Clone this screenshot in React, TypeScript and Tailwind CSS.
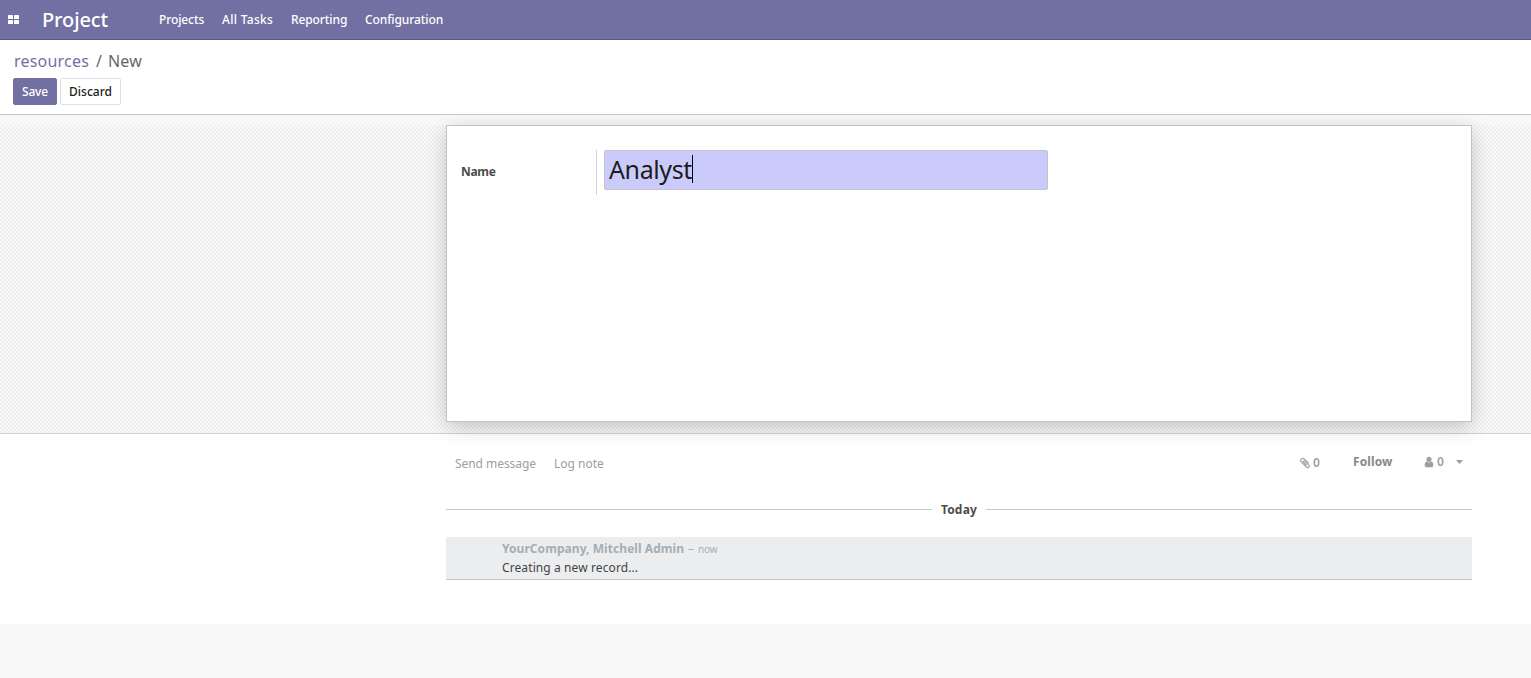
import React from 'react';

function GridIcon() {
  return (
    <svg className="mt-[15px] h-[9px] w-[11px]" viewBox="0 0 11 9" fill="#fff">
      <rect x="0" y="0" width="5" height="4" rx="0.6" />
      <rect x="6" y="0" width="5" height="4" rx="0.6" />
      <rect x="0" y="5" width="5" height="4" rx="0.6" />
      <rect x="6" y="5" width="5" height="4" rx="0.6" />
    </svg>
  );
}

function PaperclipIcon() {
  return (
    <svg className="mt-[6px] h-3 w-3" viewBox="0 0 1792 1792" fill="currentColor" stroke="currentColor" strokeWidth="60">
      <path d="M1596 1385q0 117-79 196t-196 79q-135 0-235-100l-777-776q-113-115-113-271 0-159 110-270t269-111q158 0 273 113l605 606q10 10 10 22 0 16-30.5 46.5t-46.5 30.5q-13 0-23-10l-606-607q-79-77-181-77-106 0-179 75t-73 181q0 105 76 181l776 777q63 63 145 63 64 0 106-42t42-106q0-82-63-145l-581-581q-26-24-60-24-29 0-48 19t-19 48q0 32 25 59l410 410q10 10 10 22 0 16-31 47t-47 31q-12 0-22-10l-410-410q-63-61-63-149 0-82 57-139t139-57q88 0 149 63l581 581q100 98 100 235z" />
    </svg>
  );
}

function UserIcon() {
  return (
    <svg className="mt-[5px] -ml-px h-3 w-3" viewBox="0 0 1792 1792" fill="currentColor">
      <path d="M1536 1399q0 109-62.5 187t-150.5 78h-854q-88 0-150.5-78t-62.5-187q0-85 8.5-160.5t31.5-152 58.5-131 94-89 134.5-34.5q131 128 313 128t313-128q76 0 134.5 34.5t94 89 58.5 131 31.5 152 8.5 160.5zm-256-887q0 159-112.5 271.5t-271.5 112.5-271.5-112.5-112.5-271.5 112.5-271.5 271.5-112.5 271.5 112.5 112.5 271.5z" />
    </svg>
  );
}

function NavBar() {
  return (
    <header className="flex h-10 items-start border-b border-[#5a5889] bg-[#7270a2] pl-2 text-white">
      <GridIcon />
      <h1 className="ml-[23px] w-[117px] text-[20px] leading-[39px] font-medium tracking-[-0.1px]">Project</h1>
      <nav className="flex text-[12px] leading-[39px] font-medium">
        <a className="w-[63px] tracking-[-0.1px]">Projects</a>
        <a className="w-[69px] tracking-[0.3px]">All Tasks</a>
        <a className="w-[74px] tracking-[-0.1px]">Reporting</a>
        <a className="tracking-[-0.1px]">Configuration</a>
      </nav>
    </header>
  );
}

function ControlPanel() {
  return (
    <section className="h-[75px] border-b border-[#c8c8ca] bg-white px-[13px] pt-[11px]">
      <div className="flex pl-px text-[16px] leading-[21px] tracking-[0.2px]">
        <a className="w-[82px] text-[#7270a2]">resources</a>
        <span className="w-3 text-[#666]">/</span>
        <span className="text-[#666]">New</span>
      </div>
      <div className="mt-[6px] flex gap-[3px] text-[12px] leading-[25px] font-medium">
        <button className="h-[27px] w-11 rounded-[2px] border border-[#7270a2] bg-[#7270a2] tracking-[-0.2px] text-white">Save</button>
        <button className="h-[27px] w-[61px] rounded-[2px] border border-[#dee0e6] bg-white text-[#222]">Discard</button>
      </div>
    </section>
  );
}

function FormSheet() {
  return (
    <section className="relative border-b border-[#d2d2d4] pt-[10px]">
      <div className="flex h-[308px] bg-[repeating-conic-gradient(#eeeeee_0_25%,#fafafa_0_50%)] bg-size-[4px_4px]">
        <div className="ml-[446px] flex h-[297px] w-[1026px] items-start border border-[#c0c0cf] bg-white pt-6 pl-[14px] shadow-[0_5px_20px_-1px_rgba(0,0,0,0.22)]">
          <label className="w-[135px] text-[12px] leading-[43px] font-bold tracking-[-0.3px] text-[#4c4c4c]">Name</label>
          <div className="h-[45px] border-l border-[#d5d5d5] pl-[7px]">
            <div className="flex h-10 w-[444px] items-start rounded-[2px] border border-[#c3c3cf] bg-[#cbcbfb] pl-1 text-[25px] leading-[36px] tracking-[-0.4px] text-[#1c1c1c]">
              <span>Analyst</span>
              <span className="mt-1 h-7 w-px bg-black" />
            </div>
          </div>
        </div>
      </div>
    </section>
  );
}

function Chatter() {
  return (
    <section className="h-[190px] bg-white pl-[446px]">
      <div className="flex w-[1026px] items-start pt-[17px] text-[12px] text-[#9a9fa3]">
        <a className="ml-[9px] w-[99px] leading-[25px] tracking-[-0.05px]">Send message</a>
        <a className="leading-[25px]">Log note</a>
        <div className="ml-auto flex w-[173px] items-start">
          <span className="flex w-[54px] gap-[2px] leading-[23px] font-semibold"><PaperclipIcon />0</span>
          <span className="w-[71px] leading-[21px] font-bold tracking-[0.1px] text-[#888]">Follow</span>
          <span className="flex gap-[2px] leading-[21px] font-semibold"><UserIcon />0</span>
          <svg className="mt-[9px] ml-3 h-1 w-[7px]" viewBox="0 0 7 4" fill="currentColor"><path d="M0 0h7L3.5 4z" /></svg>
        </div>
      </div>
      <div className="mt-[22px] flex h-[22px] w-[1026px] items-center gap-2 text-[12px] font-bold text-[#4c4c4c]">
        <hr className="flex-1 border-[#c8c8ca]" />
        <span className="w-[38px] pt-[2px] text-center tracking-[0.2px]">Today</span>
        <hr className="flex-1 border-[#c8c8ca]" />
      </div>
      <article className="mt-[17px] h-[43px] w-[1026px] border-b border-[#c5c8cb] bg-[#ecedef] pl-14 text-[12px]">
        <div className="flex h-[21px] leading-[23px] text-[#a3adb5]">
          <b className="w-[186px] tracking-[0.06px]">YourCompany, Mitchell Admin</b>
          <span className="w-[10px]">–</span>
          <span className="pt-px text-[10px] tracking-[-0.2px]">now</span>
        </div>
        <p className="leading-[19px] tracking-[0.1px] text-[#444]">Creating a new record...</p>
      </article>
    </section>
  );
}

export default function App() {
  return (
    <main className="h-[678px] w-[1531px] overflow-hidden bg-[#f8f8f8] font-['Noto_Sans',sans-serif]">
      <NavBar />
      <ControlPanel />
      <FormSheet />
      <Chatter />
    </main>
  );
}
